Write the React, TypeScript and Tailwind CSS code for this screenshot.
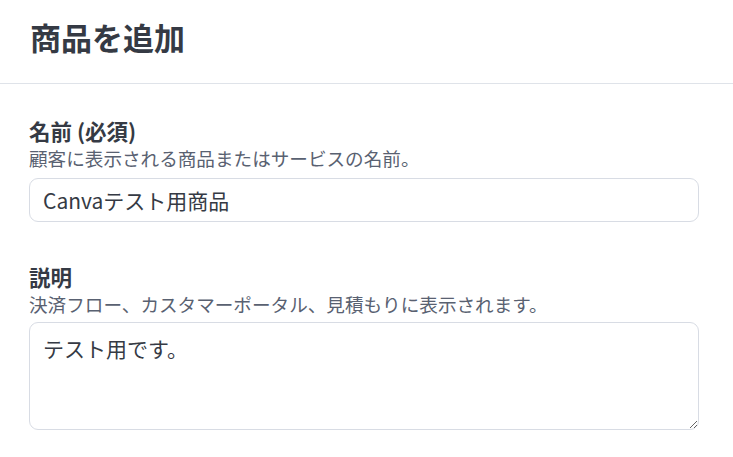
import React from "react";

const font = '"Noto Sans CJK JP", "Noto Sans", sans-serif';

export default function App() {
  return (
    <div className="w-[733px] h-[457px] bg-white overflow-hidden" style={{ fontFamily: font }}>
      <div className="h-[84px] border-b border-[#dfe3e9] flex items-center pl-[30px]">
        <h1 className="text-[31px] leading-[40px] font-bold text-[#353a44] -mt-[9px]">商品を追加</h1>
      </div>
      <div className="pl-[29px] pr-[34px] pt-[33px] flex flex-col">
        <label className="text-[21.5px] leading-[28px] font-bold text-[#353a44]">名前 (必須)</label>
        <p className="text-[18.6px] leading-[24px] text-[#596171] mt-px">顧客に表示される商品またはサービスの名前。</p>
        <input
          defaultValue="Canvaテスト用商品"
          className="mt-[8px] h-[44px] w-full rounded-[9px] border border-[#d8dce4] px-[13px] text-[21px] text-[#353a44] outline-none bg-white"
          style={{ fontFamily: font }}
        />
        <label className="mt-[41px] text-[21.5px] leading-[28px] font-bold text-[#353a44]">説明</label>
        <p className="text-[18.6px] leading-[24px] text-[#596171] mt-px">決済フロー、カスタマーポータル、見積もりに表示されます。</p>
        <textarea
          defaultValue="テスト用です。"
          className="mt-[6px] h-[108px] w-full rounded-[9px] border border-[#d8dce4] px-[13px] pt-[11px] text-[21px] leading-[28px] text-[#353a44] outline-none bg-white"
          style={{ fontFamily: font }}
        />
      </div>
    </div>
  );
}
